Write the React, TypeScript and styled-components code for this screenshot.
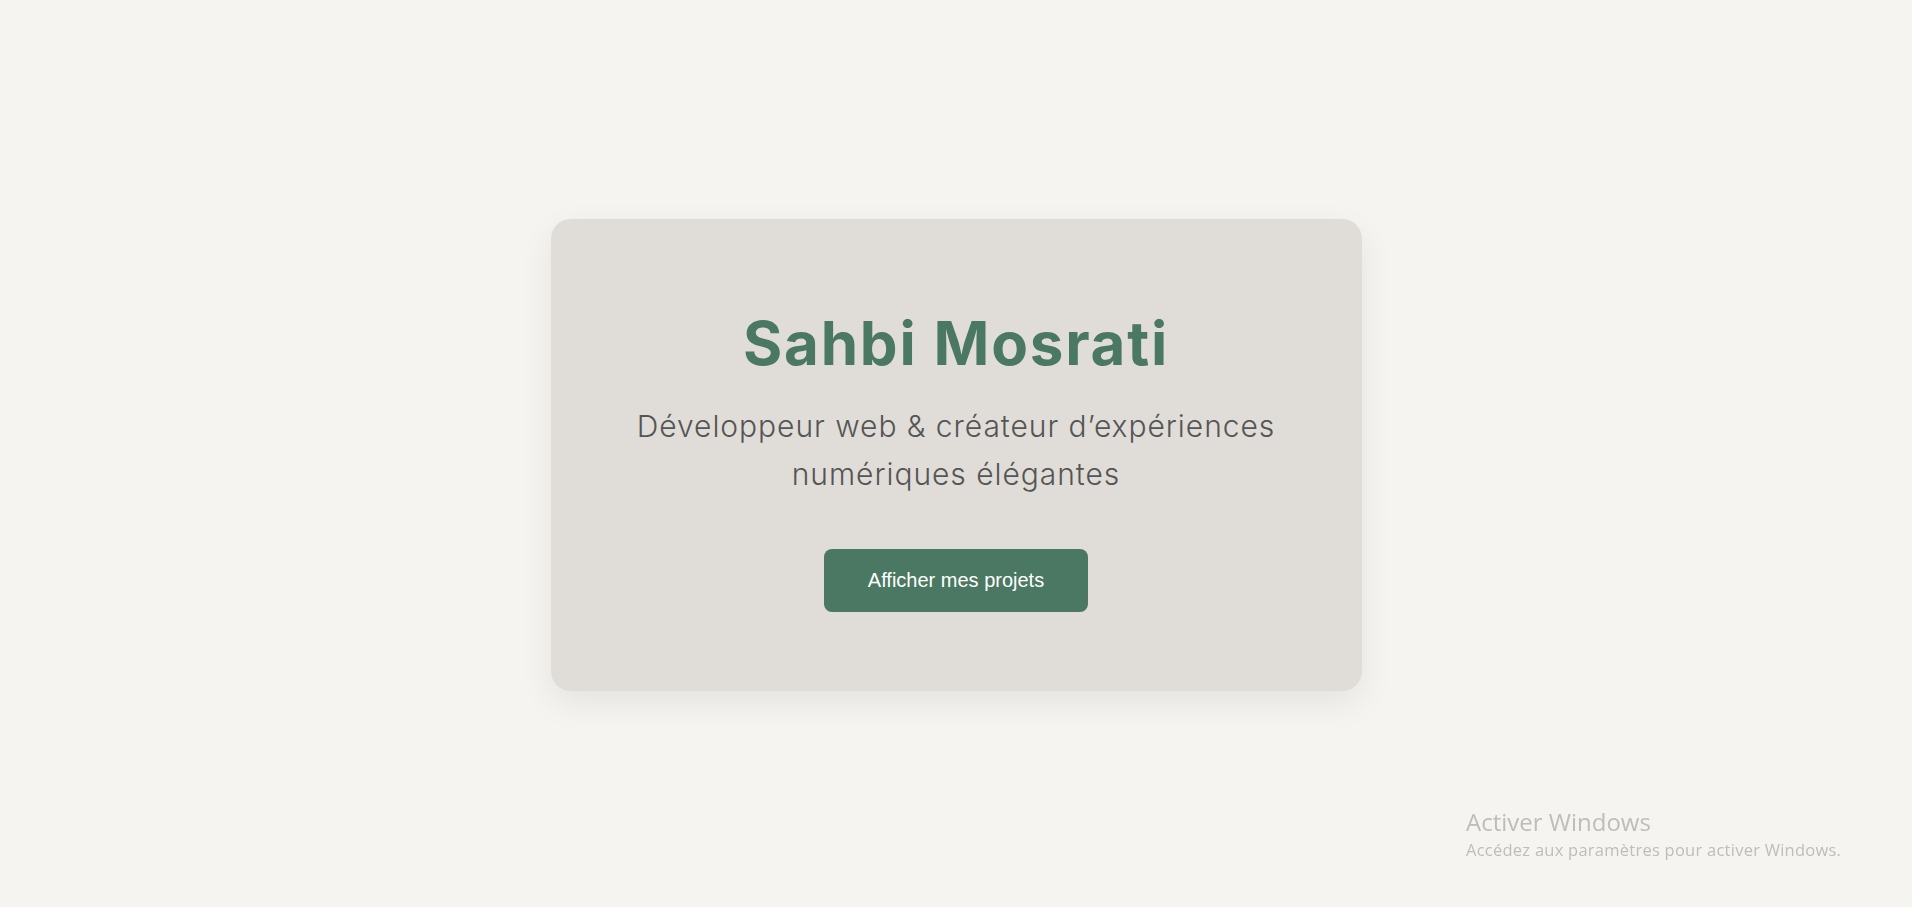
import React from "react";
import styled, { createGlobalStyle } from "styled-components";

const GlobalStyle = createGlobalStyle`
  * { box-sizing: border-box; }
  html, body { margin: 0; padding: 0; }
  body {
    background: #f5f4f0;
    font-family: "Inter", "Noto Sans", sans-serif;
    overflow: hidden;
  }
`;

const Page = styled.main`
  min-height: 100vh;
  display: flex;
  align-items: center;
  justify-content: center;
  padding-top: 2px;
`;

const Card = styled.section`
  width: 811px;
  background: #e0ddd8;
  border-radius: 20px;
  box-shadow: 0 12px 34px rgba(0, 0, 0, 0.07);
  padding: 88px 40px 79px;
  display: flex;
  flex-direction: column;
  align-items: center;
  text-align: center;
`;

const Title = styled.h1`
  margin: 0;
  font-family: "Inter", "Noto Sans", sans-serif;
  font-weight: 700;
  font-size: 60px;
  line-height: 72px;
  color: #4a7862;
  letter-spacing: 1.8px;
`;

const Subtitle = styled.p`
  margin: 23px 0 0;
  font-family: "Inter", "Noto Sans", sans-serif;
  font-weight: 300;
  font-size: 30px;
  line-height: 48px;
  color: #555555;
  letter-spacing: 0.95px;
`;

const Button = styled.button`
  margin-top: 51px;
  width: 264px;
  height: 63px;
  border: none;
  border-radius: 8px;
  background: #4a7862;
  color: #ffffff;
  font-family: "Liberation Sans", Arial, sans-serif;
  font-size: 20px;
  cursor: pointer;
`;

const Watermark = styled.div`
  position: fixed;
  left: 1466px;
  top: 806px;
  font-family: "Open Sans", "Noto Sans", sans-serif;
  color: #bdbdbb;
  pointer-events: none;
`;

const WatermarkTitle = styled.div`
  font-size: 24px;
  line-height: 32px;
`;

const WatermarkText = styled.div`
  font-size: 16.5px;
  line-height: 23px;
  letter-spacing: 0.25px;
`;

export default function App() {
  return (
    <>
      <GlobalStyle />
      <Page>
        <Card>
          <Title>Sahbi Mosrati</Title>
          <Subtitle>
            Développeur web &amp; créateur d’expériences
            <br />
            numériques élégantes
          </Subtitle>
          <Button>Afficher mes projets</Button>
        </Card>
      </Page>
      <Watermark>
        <WatermarkTitle>Activer Windows</WatermarkTitle>
        <WatermarkText>Accédez aux paramètres pour activer Windows.</WatermarkText>
      </Watermark>
    </>
  );
}
